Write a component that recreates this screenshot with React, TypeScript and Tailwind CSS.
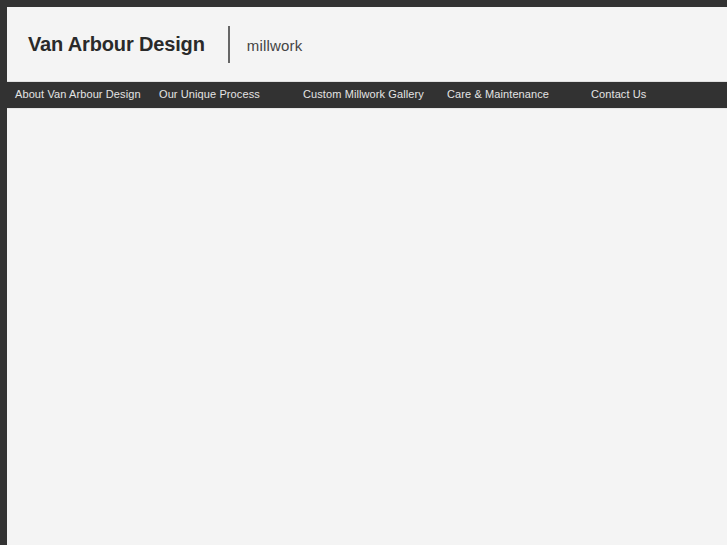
export default function App() {
  const items = [
    "About Van Arbour Design",
    "Our Unique Process",
    "Custom Millwork Gallery",
    "Care & Maintenance",
    "Contact Us",
  ];
  return (
    <div className="h-[545px] w-[727px] overflow-hidden bg-[#333333] pl-[7px] pt-[7px] font-['Liberation_Sans',Arial,sans-serif]">
      <div className="flex h-full flex-col bg-[#f4f4f4]">
        <div className="flex h-[75px] items-center border-b border-[#e0e0e0] pl-[21px]">
          <div className="text-[20px] font-bold tracking-[-0.15px] text-[#2a2a2a]">Van Arbour Design</div>
          <div className="ml-[23px] h-[37px] w-[2px] bg-[#666666]"></div>
          <div className="ml-[17px] pt-[4px] text-[15px] tracking-[0.2px] text-[#444444]">millwork</div>
        </div>
        <div className="-ml-[7px] flex h-[26px] items-center bg-[#323232] pb-[1px] pl-[15px]">
          {items.map((t) => (
            <div key={t} className="w-[144px] shrink-0 text-[11px] tracking-[0.1px] text-[#e4e4e4]">
              {t}
            </div>
          ))}
        </div>
        <div className="flex-1 border-t border-[#e6e6e6]"></div>
      </div>
    </div>
  );
}
